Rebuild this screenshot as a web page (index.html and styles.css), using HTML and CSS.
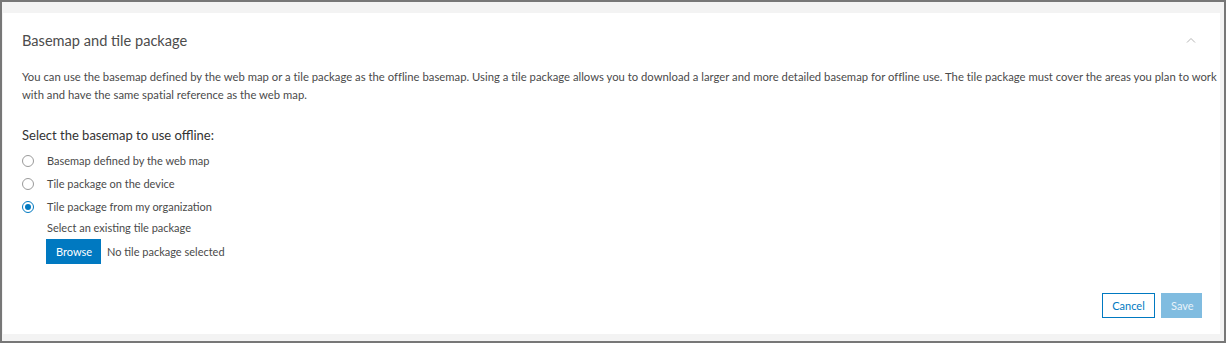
FILE: index.html
```html
<!DOCTYPE html>
<html>
<head>
<meta charset="utf-8">
<link rel="stylesheet" href="styles.css">
</head>
<body>
<div class="frame">
  <div class="card">
    <div class="header">
      <h2 class="title">Basemap and tile package</h2>
      <svg class="chev" width="10" height="6" viewBox="0 0 10 6"><path d="M1 5.5 L5 1.5 L9 5.5" fill="none" stroke="#b5b5b5" stroke-width="1"/></svg>
    </div>
    <p class="desc">You can use the basemap defined by the web map or a tile package as the offline basemap. Using a tile package allows you to download a larger and more detailed basemap for offline use. The tile package must cover the areas you plan to work with and have the same spatial reference as the web map.</p>
    <div class="label">Select the basemap to use offline:</div>
    <div class="options">
      <div class="opt"><span class="radio"></span><span>Basemap defined by the web map</span></div>
      <div class="opt"><span class="radio"></span><span>Tile package on the device</span></div>
      <div class="opt"><span class="radio checked"></span><span>Tile package from my organization</span></div>
    </div>
    <div class="sub">
      <div class="subtext">Select an existing tile package</div>
      <div class="browse-row"><button class="btn primary">Browse</button><span>No tile package selected</span></div>
    </div>
    <div class="footer">
      <button class="btn outline">Cancel</button>
      <button class="btn disabled">Save</button>
    </div>
  </div>
</div>
</body>
</html>
```
FILE: styles.css
```css
* { box-sizing: border-box; }
html, body { margin: 0; padding: 0; }
body { width: 1228px; height: 344px; background: #fff; font-family: "Lato", "Noto Sans", sans-serif; }
.frame {
  width: 1226px; height: 343px;
  border: 2px solid #777;
  background: #f3f3f3;
  padding: 11px 4px 7px 1px;
}
.card {
  background: #fff;
  height: 100%;
  padding: 0 0 0 19px;
  display: flex; flex-direction: column;
  color: #4a4a4a;
}
.header { display: flex; align-items: center; justify-content: space-between; height: 55px; padding-right: 24px; }
.title { margin: 0; font-size: 14.6px; font-weight: 400; color: #4c4c4c; }
.chev { margin-top: -2px; }
.desc { margin: 0; font-size: 11.25px; line-height: 18px; color: #4a4a4a; letter-spacing: 0.02px; }
.label { margin-top: 22px; font-size: 13px; color: #333; line-height: 18px; }
.options { margin-top: 5px; display: flex; flex-direction: column; }
.opt { display: flex; align-items: center; height: 23px; font-size: 11px; color: #4a4a4a; }
.radio { width: 12px; height: 12px; border: 1px solid #9a9a9a; border-radius: 50%; margin: 0 13px 0 0; display: inline-block; position: relative; }
.radio.checked { border-color: #0079c1; }
.radio.checked::after { content: ""; position: absolute; left: 2px; top: 2px; width: 6px; height: 6px; border-radius: 50%; background: #0079c1; }
.sub { padding-left: 24px; font-size: 11px; }
.subtext { line-height: 20px; padding-left: 1px; }
.browse-row { display: flex; align-items: center; gap: 6px; margin-top: 1px; }
.btn { font-family: inherit; font-size: 11px; height: 25px; border: 1px solid transparent; padding: 0 9px; cursor: pointer; }
.primary { background: #0079c1; color: #fff; border-color: #0079c1; width: 55px; }
.footer { margin-top: auto; display: flex; justify-content: flex-end; gap: 6px; padding: 0 18px 16px 0; }
.outline { background: #fff; color: #0079c1; border-color: #0079c1; width: 53px; }
.disabled { background: #80bce0; color: #e8f3fa; border-color: #80bce0; width: 41px; }
```
